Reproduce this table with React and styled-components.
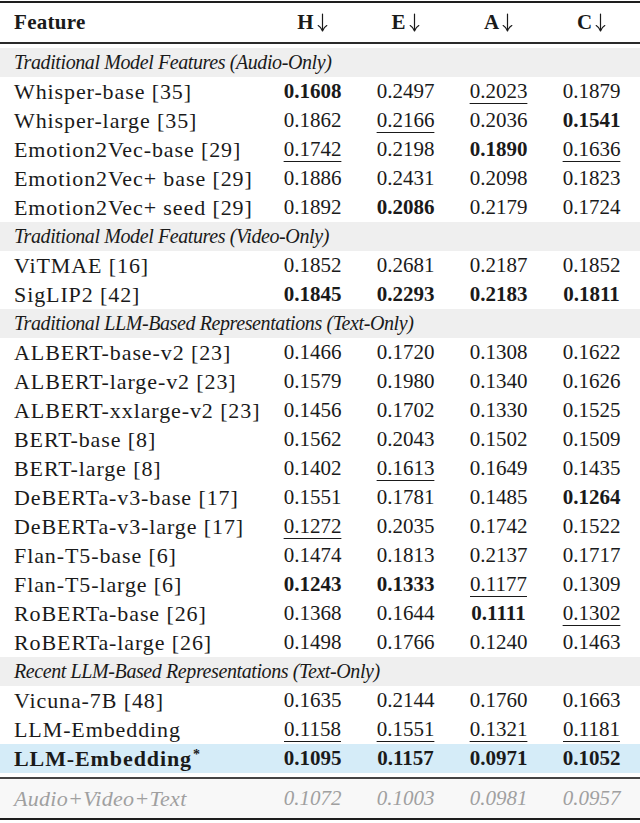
import React from "react";
import styled, { createGlobalStyle, css } from "styled-components";

const Global = createGlobalStyle`
  html, body { margin: 0; padding: 0; background: #ffffff; }
  body { font-family: "Liberation Serif", "DejaVu Serif", serif; color: #1a1a1a; }
`;

const Table = styled.div`
  width: 640px;
  padding-top: 1px;
`;

const Rule = styled.div`
  height: ${(p) => p.$h || 2}px;
  background: ${(p) => p.$c || "#222"};
  margin-top: ${(p) => p.$mt || 0}px;
  margin-bottom: ${(p) => p.$mb || 0}px;
`;

const Row = styled.div`
  display: grid;
  grid-template-columns: 266px repeat(4, 93px);
  align-items: center;
  height: ${(p) => p.$h || 29}px;
  font-size: 21px;
  ${(p) =>
    p.$variant === "section" &&
    css`
      background: #efefef;
      font-style: italic;
    `}
  ${(p) =>
    p.$variant === "highlight" &&
    css`
      background: #d5ecf8;
      font-weight: bold;
    `}
  ${(p) =>
    p.$variant === "header" &&
    css`
      font-weight: bold;
      font-size: 21px;
    `}
  ${(p) =>
    p.$variant === "muted" &&
    css`
      background: #f8f8f8;
      font-style: italic;
      color: #a0a0a0;
    `}
`;

const sizes = { section: 20, head: 21, muted: 22, bold: 22, body: 22 };
const spacing = { section: -0.4, head: 0.3, muted: 0.3, bold: 0.9, body: 0.9 };

const Label = styled.div`
  padding-left: 14px;
  white-space: nowrap;
  font-size: ${(p) => sizes[p.$kind || "body"]}px;
  letter-spacing: ${(p) => spacing[p.$kind || "body"]}px;
  grid-column: ${(p) => (p.$kind === "section" ? "1 / -1" : "auto")};
`;

const Cell = styled.div`
  display: flex;
  justify-content: center;
  align-items: center;
  white-space: nowrap;
  font-weight: ${(p) => (p.$b ? "bold" : "inherit")};
`;

const Num = styled.span`
  ${(p) =>
    p.$u &&
    css`
      text-decoration: underline;
      text-decoration-thickness: 1px;
      text-underline-offset: 5px;
    `}
`;

const ArrowSvg = styled.svg`
  margin-left: 3px;
  margin-top: -1px;
  flex: none;
`;

const Sup = styled.sup`
  font-size: 14px;
  vertical-align: 7px;
  line-height: 0;
  margin-left: 1px;
`;

function DownArrow() {
  return (
    <ArrowSvg width="11" height="19" viewBox="0 0 11 19" aria-hidden="true">
      <path
        d="M5.5 1 V17.5 M1.2 12.6 Q4.4 14.6 5.5 18 Q6.6 14.6 9.8 12.6"
        fill="none"
        stroke="#1a1a1a"
        strokeWidth="1.2"
        strokeLinecap="round"
        strokeLinejoin="round"
      />
    </ArrowSvg>
  );
}

const sections = [
  {
    title: "Traditional Model Features (Audio-Only)",
    rows: [
      ["Whisper-base [35]", "0.1608b", "0.2497", "0.2023u", "0.1879"],
      ["Whisper-large [35]", "0.1862", "0.2166u", "0.2036", "0.1541b"],
      ["Emotion2Vec-base [29]", "0.1742u", "0.2198", "0.1890b", "0.1636u"],
      ["Emotion2Vec+ base [29]", "0.1886", "0.2431", "0.2098", "0.1823"],
      ["Emotion2Vec+ seed [29]", "0.1892", "0.2086b", "0.2179", "0.1724"],
    ],
  },
  {
    title: "Traditional Model Features (Video-Only)",
    rows: [
      ["ViTMAE [16]", "0.1852", "0.2681", "0.2187", "0.1852"],
      ["SigLIP2 [42]", "0.1845b", "0.2293b", "0.2183b", "0.1811b"],
    ],
  },
  {
    title: "Traditional LLM-Based Representations (Text-Only)",
    rows: [
      ["ALBERT-base-v2 [23]", "0.1466", "0.1720", "0.1308", "0.1622"],
      ["ALBERT-large-v2 [23]", "0.1579", "0.1980", "0.1340", "0.1626"],
      ["ALBERT-xxlarge-v2 [23]", "0.1456", "0.1702", "0.1330", "0.1525"],
      ["BERT-base [8]", "0.1562", "0.2043", "0.1502", "0.1509"],
      ["BERT-large [8]", "0.1402", "0.1613u", "0.1649", "0.1435"],
      ["DeBERTa-v3-base [17]", "0.1551", "0.1781", "0.1485", "0.1264b"],
      ["DeBERTa-v3-large [17]", "0.1272u", "0.2035", "0.1742", "0.1522"],
      ["Flan-T5-base [6]", "0.1474", "0.1813", "0.2137", "0.1717"],
      ["Flan-T5-large [6]", "0.1243b", "0.1333b", "0.1177u", "0.1309"],
      ["RoBERTa-base [26]", "0.1368", "0.1644", "0.1111b", "0.1302u"],
      ["RoBERTa-large [26]", "0.1498", "0.1766", "0.1240", "0.1463"],
    ],
  },
  {
    title: "Recent LLM-Based Representations (Text-Only)",
    rows: [
      ["Vicuna-7B [48]", "0.1635", "0.2144", "0.1760", "0.1663"],
      ["LLM-Embedding", "0.1158u", "0.1551u", "0.1321u", "0.1181u"],
    ],
  },
];

function Value({ v }) {
  const b = v.endsWith("b");
  const u = v.endsWith("u");
  const text = b || u ? v.slice(0, -1) : v;
  return (
    <Cell $b={b}>
      <Num $u={u}>{text}</Num>
    </Cell>
  );
}

export default function App() {
  return (
    <>
      <Global />
      <Table>
        <Rule $h={2} $c="#1e1e1e" />
        <Row $variant="header" $h={39}>
          <Label $kind="head">Feature</Label>
          {["H", "E", "A", "C"].map((h) => (
            <Cell key={h}>
              {h}
              <DownArrow />
            </Cell>
          ))}
        </Row>
        <Rule $h={2} $c="#2a2a2a" $mb={4} />
        {sections.map((s) => (
          <React.Fragment key={s.title}>
            <Row $variant="section">
              <Label $kind="section">{s.title}</Label>
            </Row>
            {s.rows.map((r) => (
              <Row key={r[0]}>
                <Label>{r[0]}</Label>
                {r.slice(1).map((v, i) => (
                  <Value key={i} v={v} />
                ))}
              </Row>
            ))}
          </React.Fragment>
        ))}
        <Row $variant="highlight">
          <Label $kind="bold">
            LLM-Embedding<Sup>*</Sup>
          </Label>
          {["0.1095", "0.1157", "0.0971", "0.1052"].map((v) => (
            <Cell key={v}>{v}</Cell>
          ))}
        </Row>
        <Rule $h={2} $c="#444" $mt={4} />
        <Row $variant="muted" $h={39}>
          <Label $kind="muted">Audio+Video+Text</Label>
          {["0.1072", "0.1003", "0.0981", "0.0957"].map((v) => (
            <Cell key={v}>{v}</Cell>
          ))}
        </Row>
        <Rule $h={2} $c="#1e1e1e" />
      </Table>
    </>
  );
}
